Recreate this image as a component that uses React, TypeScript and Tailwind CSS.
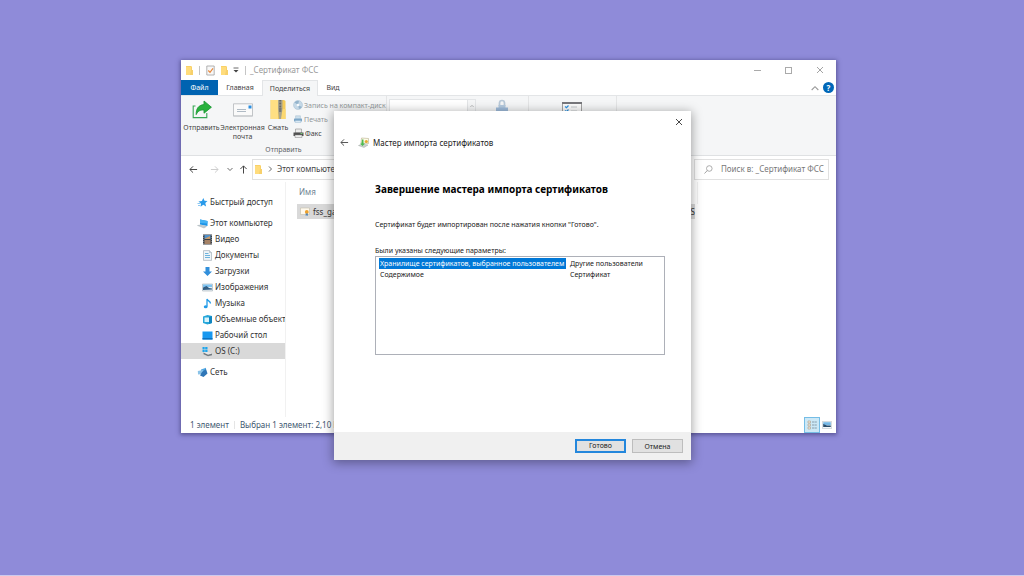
import type { ReactNode } from 'react';

type IconProps = { className?: string };

function FolderIcon({ className = 'h-[11px] w-[9px]' }: IconProps) {
  return (
    <svg viewBox="0 0 9 11" className={className} aria-hidden="true">
      <path d="M1 1h5l1 1v8H1z" fill="#f3c653" />
      <path d="M1 1.500h5.500V10H1z" fill="#ffdc7c" />
      <path d="M6 5h2v5H5z" fill="#f7d06b" />
    </svg>
  );
}

function PropertiesIcon() {
  return (
    <svg viewBox="0 0 9 11" className="h-[11px] w-[9px]" aria-hidden="true">
      <path d="M.8 1h7.400v9H.8z" fill="#f8f8f8" stroke="#a0a0a0" strokeWidth=".8" />
      <path d="M2.300 5.500 4 7.400l3-4" fill="none" stroke="#e8873a" strokeWidth="1.200" />
    </svg>
  );
}

function ShareIcon() {
  return (
    <svg viewBox="0 0 20 19" className="h-[19px] w-5" aria-hidden="true">
      <path d="M3.500 6H1.200v11.600h13.600V13" fill="none" stroke="#36a653" strokeWidth="1.100" />
      <path d="M12 1l7.400 6.200L12 13.200V10c-3.700-.3-6 .9-7.800 4.600C4 8.500 6.800 5 12 4.600z" fill="#27b13c" stroke="#1d9a35" strokeWidth=".9" />
    </svg>
  );
}

function MailIcon() {
  return (
    <svg viewBox="0 0 20 14" className="h-[14px] w-5" aria-hidden="true">
      <path d="M.5.8h19v12.400H.5z" fill="#fafafa" stroke="#b4b8bb" strokeWidth=".8" />
      <path d="M15.500 2.500h3v3h-3z" fill="#2b8ee0" />
      <path d="M4 6.500h9M4 8.500h9" stroke="#9dabb8" strokeWidth=".8" />
      <path d="M1 12.500h18" stroke="#d1d4d6" strokeWidth="1" />
    </svg>
  );
}

function ZipIcon() {
  return (
    <svg viewBox="0 0 16 21" className="h-[21px] w-4" aria-hidden="true">
      <path d="M.5 1H14l1.500 1v18H.5z" fill="#f5cb59" />
      <path d="M1 1h7v19H1z" fill="#ffdf83" />
      <path d="M11 10h4.500v10H9z" fill="#fcd871" />
      <path d="M8 1h4.500v9L11 20H9L8 10z" fill="#aaa58d" />
      <path d="M10.200 1v9" stroke="#686868" strokeWidth="2" strokeDasharray="1 .5" />
      <path d="M9 9h2.400v4H9z" fill="#777774" />
    </svg>
  );
}

function DiscIcon() {
  return (
    <svg viewBox="0 0 10 10" className="h-[10px] w-[10px]" aria-hidden="true">
      <circle cx="5" cy="5" r="4.500" fill="#c6d9e7" stroke="#a4bfd3" strokeWidth=".5" />
      <path d="M5 5 1.500 2.500A4.500 4.500 0 0 1 6 1zM5 5l4 2a4.500 4.500 0 0 1-3 2z" fill="#94b4cc" />
      <circle cx="5" cy="5" r="1.300" fill="#f7fafc" />
    </svg>
  );
}

function PrinterIcon({ tone }: { tone: 'faded' | 'solid' }) {
  const dark = tone === 'solid';
  return (
    <svg viewBox="0 0 11 10" className={dark ? 'h-[10px] w-[11px]' : 'h-2 w-[10px]'} aria-hidden="true">
      <path d="M2.500 1h6v4h-6z" fill={dark ? '#ededed' : '#cde0ec'} stroke={dark ? '#8a8a8a' : '#9cb9cf'} strokeWidth=".6" />
      <path d="M.5 4.500h10V8H.5z" fill={dark ? '#515151' : '#7ca6c7'} />
      <path d="M2 7h7v2.400H2z" fill={dark ? '#f5f5f5' : '#dcebf5'} stroke={dark ? '#777' : '#8db1cc'} strokeWidth=".5" />
      {dark && <path d="M7.500 5.500h2" stroke="#76cc76" strokeWidth="1" />}
    </svg>
  );
}

function LockIcon() {
  return (
    <svg viewBox="0 0 14 16" className="h-4 w-[14px]" aria-hidden="true">
      <path d="M4.500 7V4a2.500 2.500 0 0 1 5 0v3" fill="none" stroke="#b9c9d8" strokeWidth="1.700" />
      <path d="M3.500 6h7v3h-7z" fill="#b5cbe0" />
      <path d="M1 8.500h12V15H1z" fill="#9fbcdb" />
    </svg>
  );
}

function ChecklistIcon() {
  return (
    <svg viewBox="0 0 20 18" className="h-[18px] w-5" aria-hidden="true">
      <path d="M.5.500h19v17H.5z" fill="#fbfbfb" stroke="#8d8d8d" strokeWidth=".8" />
      <path d="M0 0h20v2H0z" fill="#77777b" />
      <path d="m3 4.500 1.500 1.200L6.500 3.500M3 8.500l1.500 1.200 2-2.200" stroke="#2b93e4" strokeWidth="1.200" fill="none" />
      <path d="M9 5h6M9 9h6" stroke="#b8bec3" strokeWidth=".8" />
    </svg>
  );
}

function Arrow({ dir, className = '' }: { dir: 'left' | 'right' | 'up'; className?: string }) {
  const d = {
    left: 'M9 5H1M4.500 1.500 1 5l3.500 3.500',
    right: 'M1 5h8M5.500 1.500 9 5 5.500 8.500',
    up: 'M5 9.500V1M1.500 4.500 5 1l3.500 3.500',
  }[dir];
  return (
    <svg viewBox="0 0 10 10" className={`h-[9px] w-[9px] ${className}`} aria-hidden="true">
      <path d={d} fill="none" stroke="currentColor" strokeWidth="1.100" />
    </svg>
  );
}

function Chevron({ dir, className = 'h-[6px] w-[6px]' }: { dir: 'up' | 'down' | 'right'; className?: string }) {
  const d = { up: 'M.5 4.500 3 2l2.500 2.500', down: 'M.5 2 3 4.500 5.500 2', right: 'M2 .5 4.500 3 2 5.500' }[dir];
  return (
    <svg viewBox="0 0 6 6" className={className} aria-hidden="true">
      <path d={d} fill="none" stroke="currentColor" strokeWidth=".8" />
    </svg>
  );
}

function CloseIcon({ className }: IconProps) {
  return (
    <svg viewBox="0 0 8 8" className={className} aria-hidden="true">
      <path d="M1 1l6 6M7 1 1 7" fill="none" stroke="currentColor" strokeWidth=".9" />
    </svg>
  );
}

function Glyph({ children }: { children: ReactNode }) {
  return (
    <svg viewBox="0 0 11 11" className="h-[11px] w-[11px] shrink-0" aria-hidden="true">
      {children}
    </svg>
  );
}

const starIcon = (
  <Glyph>
    <path d="m6.300 1 1.200 2.700 3 .2-2.200 2 .8 3.700-2.800-1.800L3.600 9.800l.4-3.300-2.600-2 3.500-.5z" fill="#2a9bea" />
    <path d="M.5 6.500h3M1 8.500h2.500" stroke="#6fbaf0" strokeWidth=".8" />
  </Glyph>
);
const computerIcon = (
  <Glyph>
    <path d="M3 1.500 10.500 3v5L3 6.500z" fill="#1b94e8" />
    <path d="M3 1.500 10.500 3v2.500L3 5z" fill="#45b2f4" />
    <path d="M.5 7.500 4 7l5.500 1.500L7 10z" fill="#c4ccd2" stroke="#98a3ab" strokeWidth=".4" />
  </Glyph>
);
const videoIcon = (
  <Glyph>
    <path d="M1 .5h9v10H1z" fill="#3b3f45" />
    <path d="M2.500 1h6v4h-6z" fill="#4f91cb" />
    <path d="M2.500 6h6v4h-6z" fill="#a58266" />
    <path d="M3 4.500 8 2v3H3z" fill="#c79a69" />
    <path d="M1.700 1v9.500M9.300 1v9.500" stroke="#a9b0b6" strokeWidth=".7" strokeDasharray="1 1" />
  </Glyph>
);
const documentIcon = (
  <Glyph>
    <path d="M1.500.6h6l2 2v7.800h-8z" fill="#eef4f8" stroke="#98a5af" strokeWidth=".6" />
    <path d="M3 3.500h3.500M3 5.500h5M3 7.500h5" stroke="#5eacd9" strokeWidth=".9" />
    <path d="M7.500.6v2h2" fill="#d5dde3" stroke="#98a5af" strokeWidth=".5" />
  </Glyph>
);
const downloadIcon = (
  <Glyph>
    <path d="M3.500 1h4v4.500H10L5.500 10 1 5.500h2.500z" fill="#318fdb" />
  </Glyph>
);
const imageIcon = (
  <Glyph>
    <path d="M.5 2h10v7H.5z" fill="#e6eef4" stroke="#a5afb7" strokeWidth=".6" />
    <path d="M1 2.500h9V5H1z" fill="#7fc4f2" />
    <path d="M1 5.500 4.500 4 7 6l3 .5v1L1 8z" fill="#325e83" />
  </Glyph>
);
const musicIcon = (
  <Glyph>
    <path d="M5 8.500V1c.5 2 3.500 2 3.500 4.500" fill="none" stroke="#239be8" strokeWidth="1.300" />
    <ellipse cx="3.700" cy="8.800" rx="1.900" ry="1.500" fill="#239be8" />
  </Glyph>
);
const cubeIcon = (
  <Glyph>
    <path d="M1 2.500 5.500 1 10 2v7l-4.500 1.500L1 9z" fill="#26a7da" />
    <path d="M2.500 3.500H7V8H2.500z" fill="#d9f4fc" />
    <path d="M7 3 10 2v7l-3 1z" fill="#1186c0" />
  </Glyph>
);
const desktopIcon = (
  <Glyph>
    <path d="M.5 1.500h10v8H.5z" fill="#1798f0" />
    <path d="M.5 8h10v1.500H.5z" fill="#0b71bf" />
  </Glyph>
);
const driveIcon = (
  <Glyph>
    <path d="M.5 1h2.200v2.200H.5zM3.200 1h2.300v2.200H3.200zM.5 3.700h2.200V6H.5zM3.200 3.700h2.300V6H3.200z" fill="#1ba5ed" />
    <path d="M1.500 6.500 6 8.500l4-1v1.700l-4 1-4.500-2z" fill="#747b80" />
    <path d="M1.500 6.300 6 6l4 1.500-4 1z" fill="#e3e6e8" />
  </Glyph>
);
const networkIcon = (
  <Glyph>
    <path d="M4 2.500 9 .8v5.400L4 7.500z" fill="#53a8e2" />
    <path d="M.8 4 6 3v4L1 7.500z" fill="#8ac3e8" />
    <path d="M5 5 9 2l1.500 4.500L6.500 10 3 8.500z" fill="#2f76b7" />
  </Glyph>
);

const places: { name: string; icon: ReactNode; root?: boolean; gap?: boolean; active?: boolean }[] = [
  { name: 'Быстрый доступ', icon: starIcon, root: true },
  { name: 'Этот компьютер', icon: computerIcon, root: true, gap: true },
  { name: 'Видео', icon: videoIcon },
  { name: 'Документы', icon: documentIcon },
  { name: 'Загрузки', icon: downloadIcon },
  { name: 'Изображения', icon: imageIcon },
  { name: 'Музыка', icon: musicIcon },
  { name: 'Объемные объекты', icon: cubeIcon },
  { name: 'Рабочий стол', icon: desktopIcon },
  { name: 'OS (C:)', icon: driveIcon, active: true },
  { name: 'Сеть', icon: networkIcon, root: true, gap: true },
];

function TitleBar() {
  return (
    <header className="flex h-5 shrink-0 items-center pr-3 pl-1 text-[#999]">
      <FolderIcon />
      <span className="mr-[6px] ml-[5px] h-[9px] w-px bg-[#c5c5c5]" />
      <button aria-label="Свойства"><PropertiesIcon /></button>
      <button aria-label="Новая папка" className="ml-[5px]"><FolderIcon /></button>
      <button aria-label="Настройка панели" className="ml-1 text-[#444]">
        <svg viewBox="0 0 6 6" className="h-[6px] w-[6px]"><path d="M.5 1h5" stroke="currentColor" strokeWidth=".8" /><path d="M.5 3h5L3 5.500z" fill="currentColor" /></svg>
      </button>
      <span className="mr-1 ml-[6px] h-[9px] w-px bg-[#c5c5c5]" />
      <h1 className="grow text-[8px] leading-3">_Сертификат ФСС</h1>
      <div className="flex items-center gap-6">
        <button aria-label="Свернуть" className="flex h-2 w-[7px] items-center"><span className="h-px w-full bg-[#aaa]" /></button>
        <button aria-label="Развернуть" className="h-[7px] w-[7px] border border-[#aaa]" />
        <button aria-label="Закрыть"><CloseIcon className="h-2 w-2" /></button>
      </div>
    </header>
  );
}

function Ribbon() {
  return (
    <>
      <nav className="flex h-4 shrink-0 items-stretch border-b border-[#e3e5e7] text-[7px] leading-[14px] text-[#444]">
        <button className="w-[37px] bg-[#0063b1] pt-px text-white">Файл</button>
        <button className="w-[44px] pt-px">Главная</button>
        <button className="-mb-px w-[56px] border border-b-0 border-[#e3e5e7] bg-[#f5f6f7]">Поделиться</button>
        <button className="w-[30px] pt-px">Вид</button>
        <div className="ml-auto flex items-center gap-1 pr-[2px] text-[#999]">
          <button aria-label="Свернуть ленту"><Chevron dir="up" className="h-2 w-2" /></button>
          <button aria-label="Справка" className="flex h-[11px] w-[11px] items-center justify-center rounded-full bg-[#0067b8] text-[8px] font-bold text-white">?</button>
        </div>
      </nav>
      <section className="flex h-[60px] shrink-0 border-b border-[#dfe1e3] bg-[#f5f6f7] text-[7px] leading-[9px] text-[#444]">
        <div className="flex w-[206px] shrink-0 flex-col border-r border-[#e4e5e6]">
          <div className="flex grow pl-[3px]">
            <button className="flex w-[35px] flex-col items-center pt-1"><ShareIcon /><span className="mt-1">Отправить</span></button>
            <button className="flex w-[47px] flex-col items-center pt-[7px]"><MailIcon /><span className="mt-[6px]">Электронная<br />почта</span></button>
            <button className="flex w-[24px] flex-col items-center pt-[3px]"><ZipIcon /><span className="mt-[3px]">Сжать</span></button>
            <div className="flex flex-col pt-[2px] pl-[3px] whitespace-nowrap text-[#929699]">
              <button className="flex h-[14px] items-center gap-px"><DiscIcon />Запись на компакт-диск</button>
              <button className="flex h-[14px] items-center gap-px"><PrinterIcon tone="faded" />Печать</button>
              <button className="flex h-[14px] items-center gap-px text-[#444]"><PrinterIcon tone="solid" />Факс</button>
            </div>
          </div>
          <p className="mb-px text-center text-[#5f6265]">Отправить</p>
        </div>
        <div className="flex w-[142px] shrink-0 items-start border-r border-[#e4e5e6] pt-[3px] pl-[2px]">
          <div className="flex h-12 w-[87px] justify-end border border-[#e3e5e7] bg-white">
            <span className="flex w-2 justify-center border-l border-[#e3e5e7] bg-[#f5f6f7] pt-1 text-[#888]"><Chevron dir="up" className="h-1 w-1" /></span>
          </div>
          <div className="ml-[19px]"><LockIcon /></div>
        </div>
        <div className="flex w-[88px] shrink-0 justify-center border-r border-[#e4e5e6] pt-[6px] pr-[2px]"><ChecklistIcon /></div>
      </section>
    </>
  );
}

function AddressBar() {
  return (
    <div className="flex h-[26px] shrink-0 items-center pr-[7px] pl-2 text-[8px] text-[#444]">
      <button aria-label="Назад"><Arrow dir="left" /></button>
      <button aria-label="Вперед" className="ml-3 text-[#ccc]"><Arrow dir="right" /></button>
      <button aria-label="Последние расположения" className="ml-2"><Chevron dir="down" /></button>
      <button aria-label="Вверх" className="ml-[6px]"><Arrow dir="up" /></button>
      <div className="ml-1 flex h-[21px] grow items-center border border-[#e1e1e1] pl-px">
        <FolderIcon />
        <Chevron dir="right" className="mx-1 h-[6px] w-[6px]" />
        <span>Этот компьютер</span>
      </div>
      <label className="ml-[7px] flex h-[21px] w-[135px] items-center border border-[#e1e1e1] pl-[9px]">
        <svg viewBox="0 0 9 9" className="h-[9px] w-[9px] shrink-0" aria-hidden="true"><circle cx="5.300" cy="3.500" r="2.800" fill="none" stroke="#999" strokeWidth=".8" /><path d="M3.300 5.500.5 8.500" stroke="#999" strokeWidth=".9" /></svg>
        <input aria-label="Поиск" placeholder="Поиск в: _Сертификат ФСС" className="ml-2 w-full min-w-0 outline-none placeholder:text-[#777]" />
      </label>
    </div>
  );
}

function Sidebar() {
  return (
    <nav className="w-[105px] shrink-0 border-r border-[#f1f1f1] pt-3">
      <ul>
        {places.map((p) => (
          <li key={p.name} className={p.gap ? 'mt-[5px]' : ''}>
            <a href="#" className={`flex h-4 items-center gap-[2px] overflow-hidden whitespace-nowrap text-[#333] ${p.root ? 'pl-4' : 'pl-[21px]'} ${p.active ? 'bg-[#d9d9d9]' : ''}`}>
              {p.icon}
              {p.name}
            </a>
          </li>
        ))}
      </ul>
    </nav>
  );
}

function Explorer() {
  return (
    <main className="absolute top-[60px] right-[188px] bottom-[142px] left-[181px] flex flex-col overflow-hidden bg-white text-[8px] shadow-[0_1px_4px_1px_rgba(40,35,90,0.5)]">
      <TitleBar />
      <Ribbon />
      <AddressBar />
      <div className="flex min-h-0 grow">
        <Sidebar />
        <section className="grow pl-[11px]">
          <div className="flex h-[22px] w-[401px] items-center border-r border-[#f1f1f1] pb-[2px] pl-[2px] text-[#6d7f91]">Имя</div>
          <button className="flex h-[15px] w-[398px] items-center bg-[#d9d9d9] pl-[3px] text-[#333]">
            <svg viewBox="0 0 10 9" className="mr-[3px] h-[9px] w-[10px]" aria-hidden="true"><path d="M.5 1h9v6.500h-9z" fill="#fff9ed" stroke="#c5bda9" strokeWidth=".6" /><circle cx="6.800" cy="5" r="1.900" fill="#eda12d" /><path d="M5.700 6.500h2.200V9l-1-.7-1.200.7z" fill="#4d86bd" /></svg>
            <span>fss_gar</span>
            <span className="ml-auto">S</span>
          </button>
        </section>
      </div>
      <footer className="flex h-4 shrink-0 items-center pr-1 pl-[9px] text-[#40576f]">
        <span>1 элемент</span>
        <span className="mx-[5px] h-2 w-px bg-[#e5e5e5]" />
        <span>Выбран 1 элемент: 2,10 КБ</span>
        <button aria-label="Таблица" className="ml-auto flex h-4 w-4 items-center justify-center border border-[#75bde6] bg-[#cce8f6]">
          <svg viewBox="0 0 11 10" className="h-[10px] w-[11px]"><path d="M1 1h2.500v2H1zM1 4h2.500v2H1zM1 7h2.500v2H1z" fill="#f5eadb" stroke="#b3a696" strokeWidth=".7" /><path d="M5 2h5M5 5h5M5 8h5" stroke="#7f96a5" strokeWidth=".9" strokeDasharray="2.200 .4" /></svg>
        </button>
        <button aria-label="Крупные значки" className="ml-[2px]">
          <svg viewBox="0 0 10 8" className="h-2 w-[10px]"><path d="M.4.4h9.200v7.200H.4z" fill="#f5f8fa" stroke="#b8bfc5" strokeWidth=".6" /><path d="M1.200 1.200h7.600v3H1.200z" fill="#75b7e5" /><path d="M1.200 3 5 4.500h3.800V6H1.200z" fill="#294c6b" /></svg>
        </button>
      </footer>
    </main>
  );
}

function ImportWizard() {
  return (
    <div role="dialog" aria-labelledby="wizard-name" className="absolute top-[111px] left-[334px] flex w-[357px] flex-col bg-white text-[7px] leading-[11px] text-[#222] shadow-[0_2px_10px_1px_rgba(0,0,0,0.35)]">
      <div className="flex h-[21px] items-center justify-end pr-2 text-[#333]">
        <button aria-label="Закрыть"><CloseIcon className="h-2 w-2" /></button>
      </div>
      <header className="flex h-5 items-center pl-[6px]">
        <button aria-label="Назад" className="mr-[9px] text-[#555]"><Arrow dir="left" /></button>
        <svg viewBox="0 0 11 11" className="mr-1 h-[11px] w-[11px]" aria-hidden="true">
          <path d="M3.500 1 10.500 1.500v5L3 6z" fill="#fffbe8" stroke="#b7b08c" strokeWidth=".6" />
          <circle cx="8.300" cy="4.500" r="1.600" fill="#e7a934" />
          <path d="M.5 8.500 4 7l6 1-4 2.500z" fill="#cdd2cf" stroke="#919994" strokeWidth=".4" />
          <path d="M4 2.500h1.500v4H7L4.500 9 2 6.500h1.500z" fill="#4dbb50" />
        </svg>
        <h2 id="wizard-name" className="text-[8px]">Мастер импорта сертификатов</h2>
      </header>
      <section className="pt-[30px] pr-[26px] pl-[41px]">
        <h3 className="h-4 text-[10px] leading-[14px] font-bold text-black">Завершение мастера импорта сертификатов</h3>
        <p className="mt-[21px]">Сертификат будет импортирован после нажатия кнопки "Готово".</p>
        <p className="mt-[15px]">Были указаны следующие параметры:</p>
        <div className="h-[99px] border border-[#adb0b8] px-[3px] pt-px">
          <table className="border-collapse">
            <tbody>
              <tr><td className="w-[187px] bg-[#0078d7] pl-px whitespace-nowrap text-white">Хранилище сертификатов, выбранное пользователем</td><td className="pl-1">Другие пользователи</td></tr>
              <tr><td className="pl-px">Содержимое</td><td className="pl-1">Сертификат</td></tr>
            </tbody>
          </table>
        </div>
      </section>
      <footer className="mt-[77px] flex h-7 items-center justify-end gap-[6px] bg-[#f0f0f0] pr-2">
        <button className="h-[14px] w-[51px] border-2 border-[#2487dc] bg-[#e1e1e1] leading-[10px]">Готово</button>
        <button className="h-[14px] w-[51px] border border-[#bdbdbd] bg-[#e1e1e1]">Отмена</button>
      </footer>
    </div>
  );
}

export default function App() {
  return (
    <div className="relative min-h-screen overflow-hidden border-b border-[#cdcbed] bg-[#8f8bd9] font-['Noto_Sans','Open_Sans',sans-serif]">
      <Explorer />
      <ImportWizard />
    </div>
  );
}
